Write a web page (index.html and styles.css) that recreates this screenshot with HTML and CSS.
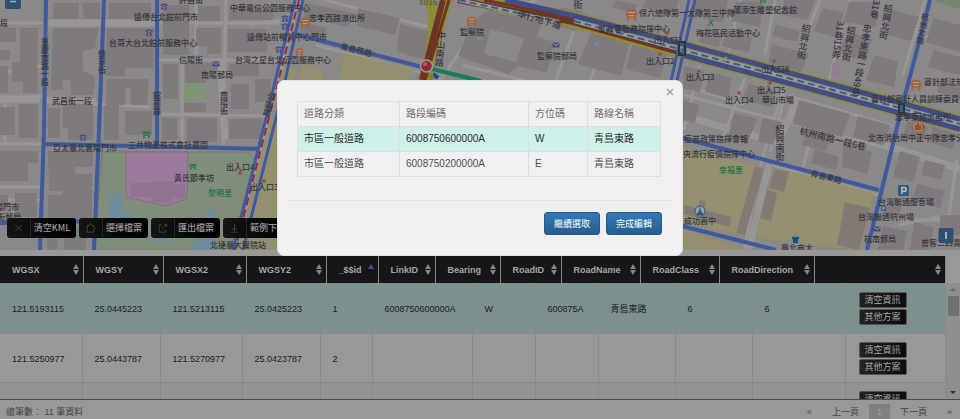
FILE: index.html
```html
<!DOCTYPE html>
<html lang="zh-Hant">
<head>
<meta charset="utf-8">
<title>路段編輯</title>
<link rel="stylesheet" href="styles.css">
</head>
<body>
<main class="page">
<section class="map" aria-label="地圖">
<svg class="map-canvas" viewBox="0 0 960 250">
<defs>
<symbol id="phone" viewBox="0 0 8 7"><path d="M.5 3V1.6Q4-.6 7.500 1.600V3H5.700V1.900H2.300V3zM2 3.300h4l1.200 3.200H.8z" fill="#494b86"/><circle cx="4" cy="4.800" r=".9" fill="#999"/></symbol>
<symbol id="mail" viewBox="0 0 8 6"><rect x=".5" y=".5" width="7" height="5" rx=".6" fill="#494b86"/><path d="M1 1.300 4 3.600 7 1.300" stroke="#aaa" fill="none" stroke-width=".8"/></symbol>
<symbol id="gov" viewBox="0 0 10 10"><path d="M.5 4 2 .6h6L9.500 4v1H8.700v4.500H7.200V7.300H2.800v2.200H1.300V5H.5z" fill="#a5623d"/><path d="M2.300 3h5.400M3 5.500h4" stroke="#aaa" stroke-width=".8"/></symbol>
<symbol id="shop" viewBox="0 0 8 6"><path d="M1 0h6l1 2.500H0zM1 3.200h6V6H5.500V4.300h-3V6H1z" fill="#347b4b"/></symbol>
<symbol id="exit" viewBox="0 0 4 4"><circle cx="2" cy="2" r="1.700" fill="#a34b35" stroke="#77655e" stroke-width=".5"/></symbol>
<symbol id="park" viewBox="0 0 11 11"><rect width="11" height="11" rx="1" fill="#315c83"/><path d="M4 9V2.500h2.200a1.900 1.900 0 0 1 0 3.800H4" fill="none" stroke="#b9bec3" stroke-width="1.500"/></symbol>
</defs>
<rect width="960" height="250" fill="#8b888a"/>
<g class="street">
<path d="M0 23H280M0 99 44 96M0 187h44M44 101 150 107M50 188h44M158 60H300M182 60V150M226 0 223 145M158 114l110 2M196 0v55M0 73l42-7M0 144h45M250 25l30-5M5 100v42M0 200h40"/>
<path d="M325 0 440 30M316 45l117 31M437 85l45-65 55-20M463 65l220 57M578 20 556 80M610 30l-20 50M700 65l-16 65M745 78l-22 60M780 100 762 160 744 250M684 85l60 20M820 0 780 100M850 0l-25 95M740 0l-12 55M775 0l-10 55M684 95l210 55M789 96l104 30M890 145l70 22M957 160l-8 55-50 10M885 220h75M925 0l-22 75M900 30l60 15M772 165l106 30M785 95l-15 57M815 122l-12 45"/>
<path class="wide" d="M44 23h115M0 99h40M769 164 749 250M798 98 777 145M684 116l95 27M884 145l76 24M220 60l5 80M43 100l53 2"/>
</g>
<g class="buildings">
<path d="M0 28h16v14H0zM20 28h18l-1 65H23V82H12V62h8zM0 50h10v10H0zM0 66h8v27H0zM53 3h26v16H53zM82 3h18v16H84zM53 28h45l-3 20-12 3v20l12 6-2 18H71V80h-8v10H51zM109 3h42v16h-42zM107 28h47l-1 40h-28v8h-19zM107 79h42l-2 26h-16V88h-6v17h-19zM48 108h12v30H48zM63 104h30v36H68v-12h-5zM104 105h15v35h-15zM125 111h27v24h-27zM0 107h15v28H0zM19 104h19v34H19zM0 151h38v12H28v18H0zM48 151h45v16H75v7h17v47H50v-15h12v-15H49zM48 195h30v-8h14v35H48zM0 195h8v15H0zM15 193h22v24H15zM47 230h10v20H47zM64 227h22v23H64z"/>
<path d="M163 5h26v50h-26zM198 6h22v15h-22zM196 28h25v26h-14v-8h-11zM229 7h44v13h-44zM228 29h39v23h-39zM163 64h15v35h-15zM185 63h33v9h-12v11h-21zM184 103h22v9h-22zM229 64h30v12h-30zM231 84h18v25h-18zM255 79h16v23h-16zM229 119h33v20h-33zM162 118h15v22h-15zM187 118h30v24h-30zM307 3l45 10-4 14-45-10zM358 8l42 10-5 17-38-9zM302 22l25 6-3 12-24-6zM400 24l35 9-5 28-33-9z"/>
<path d="M468 24l21-14 53 13-5 14 17 5-7 31-29-7-10 8-50-18 7-16zM560 7l23 5-7 19-21-5zM594 27l37 10-10 39-43-12zM633 42l35 9-8 27-34-9zM617 0l20 5-3 8-23-6zM647 0h32l-5 15-32-8zM693 0h35l-5 23-34-8zM736 2h27l-3 25-28-6zM704 28l20 5-6 14-19-5zM727 31l25 6-3 16-27-7zM823 8l21 5-7 25-23-7zM784 0h31l-8 20-26-5zM776 25l24 6-3 11-25-6zM772 44l37 10-10 23-32-9zM849 2h29l-2 25-33-5zM849 32l23 7-6 22-29-8zM874 55l24 7-4 25-28-7zM891 10l28 7-8 24-27-7zM934 18l26 7v27l-34-10zM934 50l26 7v18l-32-8zM939 81l21 6v13l-23-8z"/>
<path d="M684 66l20 6-4 20-17-4zM710 72l22 6-4 20-23-6zM749 84l27 7-4 16-30-7zM683 100l16 5-4 18-12-3zM734 113l23 6-10 25-19-6zM763 118l19 4-9 23-15-4zM799 100l51 14-8 23-49-13zM858 116l32 9-7 20-30-8zM807 128l25 7-6 16-24-6zM844 144l28 8-5 22-25-7zM815 149l24 8-3 13-25-7zM908 121l20 6-6 15-20-5zM933 127l24 7-4 15-25-7zM900 151l20 6-7 25-20-5zM925 160l20 5-4 15-20-5zM917 184l28 7-5 17-28-7zM888 202l14 4-4 12-14-4zM883 226l24 5-4 19h-25zM914 222l20 5-5 23h-19zM940 215h20v20h-20z"/>
</g>
<path class="court" d="m490 29 34 9-8 24-32-8z"/>
<path d="M102 152h146l7 9-25 89H95z" fill="#818d7b" stroke="#6f7d6a"/>
<path d="M184 83h20v17h-16l-4-3z" fill="#7d9574"/>
<path d="M126 152h62l-1 47-22 7-39-9z" fill="#9b799c" stroke="#876b87"/>
<path d="M131 183h19l4-2h16l5 3h10v14h-12v4h-22v-5h-20z" fill="#907391"/>
<path d="M833 63l9 2-2 12-9-2z" fill="#967c90"/>
<g class="water"><path d="M109 195q7-3 13 0l1 17q12 3 21 11 5 10-5 10-18-6-31-15-1-12 1-23zM152 237h15q-3 8-12 5zM195 239l15-7 9 18h-27zM207 206l9 5v9h-8zM477 37h7l-2 3h-5zM595 42l5 2-2 3-4-2z"/></g>
<g class="campus">
<path d="M345 54l68 16-6 10H340zM303 65l20 5-2 10h-21zM683 148l79 20-20 67-60-15zM775 168l98 26-14 56-103-13zM684 231l55 16v3h-55zM262 140l15-28v138h-40zM273 95l12-27 12 4-4 8h-15z"/>
<path class="block" d="M755 166l9 3-19 66-9-2zM775 169l14 3-5 20-15-4zM767 190l10 3-6 28-11-3zM845 202l25 6-11 42-22-5zM684 205l48 12-3 10-45-13zM700 200l6 2-3 16-6-2z"/>
</g>
<path d="M936 0h24v9l-23-7z" fill="#74866d"/>
<g class="major">
<path class="yellow wide" d="M428 0l6 12-3 38-8 30M447 0l-22 80"/>
<path class="yellow" d="M490 0 575 16 683 44 960 119M463 0l110 24 110 31 277 74"/>
<path class="brown" d="m443 0-21 80M458 0l115 22 110 31"/>
<path class="brown thin" d="m449 0-24 80M484 0l90 18"/>
<path class="blue" d="M505 0l70 16 108 28 277 75M683 55l277 74"/>
<path class="lane" d="m574 21 109 29 277 74M459 0l100 22"/>
<path class="laneblue" d="m574 21 109 29 277 74M459 0l100 22"/>
</g>
<g class="blue routes"><path d="M46 0 44 130 40 250M104 0l-5 130-5 120M157 0v144M45 144l217 5M0 223l94-2M291 33l131 34M930 0l-28 107-35 143M682 138l197 52M682 226l94 24"/></g>
<g class="rail"><path d="m299 0-64 250"/><path class="rail-dash" d="m299 0-64 250"/><path class="rail-edge" d="m295 0-22 90-40 160M303 0l-20 90-40 160M689 0l-20 90M695 0l-20 90"/></g>
<path d="M679 42h6v13h-6zM899 104h5v9h-5z" fill="none" stroke="#263c31" stroke-width="2"/>
<path d="m720 61 7-4M721 58l5 3" stroke="#789b6e" stroke-width="2"/>
<path d="m428 68 53 13" stroke="#147d5e" stroke-width="4"/>
<circle cx="426.500" cy="66" r="6" fill="#8f2c2f" stroke="#999" stroke-width="1.500"/><circle cx="425" cy="64" r="2" fill="#ba5a5c"/><path d="m433 74 5 4" stroke="#243f83" stroke-width="4"/><circle cx="431" cy="77" r="3" fill="#827e2c"/>
<g class="labels">
<text x="0" y="26">段</text><text x="134" y="20">遠傳台北館前門市</text><text x="109" y="46">台哥大台北館前服務中心</text><text x="179" y="3">許昌街</text><text x="230" y="11">中華電信公園服務中心</text><text x="247" y="40">遠傳站前暢貨中心門市</text><text x="179" y="63">信陽街</text><text x="201" y="78">南陽郵局</text><text x="235" y="63">台灣之星台北公園服務中心</text><text x="52" y="104">武昌街一段</text><text x="309" y="21">忠孝西路派出所</text><text x="53" y="151">亞太臺北襄陽門市</text><text x="128" y="148">三井物產株式會社農園</text><text x="174" y="181">黃氏節孝坊</text><text x="226" y="170">出入口4</text><text x="250" y="190">出入口3</text><text class="green" x="208" y="196">黎明里</text><text x="-5" y="210">陽門市</text><text x="-3" y="220">街郵局</text><text x="210" y="248">北捷臺大醫院站</text>
<text x="419" y="5" class="faint">X016</text><text x="460" y="35">監察院</text><text x="537" y="59">監察院郵局</text><text x="639" y="16">保六總隊第一大隊第三中隊</text><text x="598" y="32">警政署勤務指揮中心</text><text x="654" y="43">出入口1</text><text x="646" y="64">出入口2</text><text x="686" y="80">出入口3</text><text x="761" y="72">出入口6</text><text x="757" y="93">出入口5</text><text x="725" y="103">出入口4</text><text x="762" y="103">華山市場</text><text x="733" y="13">蒲添生雕塑紀念館</text><text x="696" y="36">梅花區民活動中心</text><text x="924" y="85">審計部法規</text><text x="871" y="102">審計部審計人員訓練委員會</text><text x="895" y="120">忠孝東路派出所</text><text x="868" y="141">北市消防局中正中隊忠孝分</text><text x="684" y="142">疫苗政策指揮會報</text><text x="683" y="157">央流行疫情指揮中心</text><text class="green" x="719" y="173">幸福里</text><text x="684" y="224">成功高中</text><text x="781" y="251">臺北商大</text><text x="878" y="205">台灣聯通醒吾場</text><text x="858" y="220">台灣聯通杭州場</text><text x="864" y="242">杭南郵局</text><text x="921" y="246">普客二四青</text>
<text transform="translate(340 49) rotate(14)">青島西路</text><text transform="translate(517 16) rotate(17)" class="big">車行地下道</text><text transform="translate(799 134) rotate(14)" class="big">杭州南路一段6巷</text><text transform="translate(810 176) rotate(14)">青島東路</text>
</g>
<g class="labels vertical"><text x="45" y="38">重慶南路一段</text><text x="102" y="50">懷寧街</text><text x="157" y="91">館前路</text><text x="224" y="91">南陽街</text><text class="big" transform="translate(442 31) rotate(5)">中山南路</text><text transform="translate(272 93) rotate(14)">公園路</text><text transform="translate(807 24) rotate(10)" class="big">紹興北街</text><text transform="translate(852 26) rotate(10)" class="big">紹興北街</text><text transform="translate(841 21) rotate(8)" class="big">31巷15弄</text><text transform="translate(868 24) rotate(10)" class="big">忠孝東路一段49巷</text><text transform="translate(889 4) rotate(10)" class="big">紹興北街</text><text transform="translate(877 0) rotate(10)" class="big">31巷</text><text x="780" y="125" class="big">紹興南街</text><text x="578" y="0" class="big">街</text><text transform="translate(926 13) rotate(12)">杭州北路</text></g>
<g>
<use href="#phone" x="160" y="3" width="8" height="7"/><use href="#phone" x="145" y="29" width="8" height="7"/><use href="#mail" x="212" y="61" width="8" height="6"/><use href="#phone" x="281" y="15" width="8" height="7"/><use href="#phone" x="281" y="23" width="8" height="7"/><use href="#phone" x="275" y="46" width="8" height="7"/><use href="#phone" x="79" y="134" width="8" height="7"/><use href="#shop" x="142" y="131" width="9" height="7"/><use href="#shop" x="189" y="164" width="8" height="6"/><use href="#gov" x="299" y="17" width="12" height="12"/><use href="#gov" x="294" y="48" width="11" height="9"/><use href="#gov" x="466" y="16" width="11" height="11"/><use href="#gov" x="625" y="8" width="13" height="14"/><use href="#gov" x="910" y="78" width="12" height="14"/><use href="#mail" x="552" y="42" width="8" height="6"/><use href="#mail" x="873" y="226" width="8" height="6"/><use href="#shop" x="759" y="-3" width="8" height="6"/>
<use href="#exit" x="238" y="171" width="4" height="4"/><use href="#exit" x="262" y="179" width="4" height="4"/><use href="#exit" x="665" y="31" width="4" height="4"/><use href="#exit" x="658" y="52" width="4" height="4"/><use href="#exit" x="697" y="69" width="4" height="4"/><use href="#exit" x="772" y="59" width="4" height="4"/><use href="#exit" x="768" y="81" width="4" height="4"/><use href="#exit" x="737" y="91" width="4" height="4"/><use href="#park" x="898" y="185" width="11" height="11"/><use href="#park" x="879" y="206" width="9" height="5"/>
<circle cx="918" cy="127" r="6" fill="#9a8177" stroke="#9c5739"/><path d="M915 130v-5h2v-2h2v2h2v5zM922 124l3 3-2 3" fill="#9b502d"/><circle cx="700" cy="211" r="5" fill="#96a0aa" stroke="#31597e"/><path d="m700 206 1 5 3 4h-8l3-4z" fill="#31597e"/><circle cx="795.500" cy="239.500" r="5" fill="#718b9e"/><path d="M792 237h7v2h-1v4h-5v-4h-1z" fill="#294d6c"/><path d="m709 19 2 3 3-2M711 22l-3 4M711 22l2 4" stroke="#367449" fill="none" stroke-width="1.200"/>
</g>
<path d="M5-3h16V7q0 2-2 2H7Q5 9 5 7z" fill="#31506f"/><path d="M10 1.500h6" stroke="#a6adb4" stroke-width="1.500"/>
<rect x="938.500" y="228" width="15" height="15" rx="2" fill="#31506f"/><path d="M946 232v7" stroke="#a6adb4" stroke-width="2"/>
</svg>
<div class="toolbar">
<button class="tool" type="button"><svg viewBox="0 0 12 12"><path d="m2 2 8 8M10 2l-8 8"/></svg><span>清空KML</span></button>
<button class="tool" type="button"><svg viewBox="0 0 12 12"><path d="M2 3h2.500q-.5-2 1.500-2t1.500 2H10v2.500q1.500 0 1.500 1T10 7.500V11H2z"/></svg><span>選擇檔案</span></button>
<button class="tool" type="button"><svg viewBox="0 0 12 12"><path d="M5.500 2.500H2V11h8V7.500M7.500 1.500H11V5M11 1.500 5.500 7"/></svg><span>匯出檔案</span></button>
<button class="tool" type="button"><svg viewBox="0 0 12 12"><path d="M6 1v8M3.500 6.500 6 9l2.500-2.500M2 11h8"/></svg><span>範例下載</span></button>
</div>
</section>

<section class="data">
<table class="grid grid-head">
<colgroup><col class="h-a"><col class="h-b"><col class="h-c"><col class="h-b"><col class="h-d"><col class="h-e"><col class="h-f"><col class="h-g"><col class="h-h"><col class="h-h"><col class="h-i"><col></colgroup>
<thead><tr><th>WGSX<i class="sort"></i></th><th>WGSY<i class="sort"></i></th><th>WGSX2<i class="sort"></i></th><th>WGSY2<i class="sort"></i></th><th>_$$id<i class="sort sort-up"></i></th><th>LinkID<i class="sort"></i></th><th>Bearing<i class="sort"></i></th><th>RoadID<i class="sort"></i></th><th>RoadName<i class="sort"></i></th><th>RoadClass<i class="sort"></i></th><th>RoadDirection<i class="sort"></i></th><th><i class="sort"></i></th></tr></thead>
</table>
<div class="scroll">
<table class="grid grid-body">
<colgroup><col class="b-a"><col class="b-b"><col class="b-a"><col class="b-b"><col class="b-c"><col class="b-d"><col class="b-e"><col class="b-e"><col class="b-f"><col class="b-f"><col class="b-g"><col></colgroup>
<tbody>
<tr class="picked"><td>121.5193115</td><td>25.0445223</td><td>121.5213115</td><td>25.0425223</td><td>1</td><td>6008750600000A</td><td>W</td><td>600875A</td><td>青島東路</td><td>6</td><td>6</td><td><div class="actions"><button type="button">清空資訊</button><button type="button">其他方案</button></div></td></tr>
<tr><td>121.5250977</td><td>25.0443787</td><td>121.5270977</td><td>25.0423787</td><td>2</td><td></td><td></td><td></td><td></td><td></td><td></td><td><div class="actions"><button type="button">清空資訊</button><button type="button">其他方案</button></div></td></tr>
<tr class="alt"><td></td><td></td><td></td><td></td><td></td><td></td><td></td><td></td><td></td><td></td><td></td><td><div class="actions"><button type="button">清空資訊</button><button type="button">其他方案</button></div></td></tr>
</tbody>
</table>
<div class="track"><span class="arrow up"></span><span class="thumb"></span><span class="arrow down"></span></div>
</div>
</section>

<footer class="foot">
<span>總筆數： 11 筆資料</span>
<nav class="pager"><a href="#">«</a><a href="#">上一頁</a><a href="#" class="current">1</a><a href="#">下一頁</a><a href="#">»</a></nav>
</footer>
</main>

<div class="modal" role="dialog" aria-label="路段選取">
<button class="close" type="button" aria-label="關閉"><svg viewBox="0 0 8 8"><path d="m1 1 6 6M7 1 1 7"/></svg></button>
<table class="roads">
<colgroup><col class="r-a"><col class="r-b"><col class="r-c"><col></colgroup>
<thead><tr><th>道路分類</th><th>路段編碼</th><th>方位碼</th><th>路線名稱</th></tr></thead>
<tbody>
<tr class="chosen"><td>市區一般道路</td><td>6008750600000A</td><td>W</td><td>青島東路</td></tr>
<tr><td>市區一般道路</td><td>6008750200000A</td><td>E</td><td>青島東路</td></tr>
</tbody>
</table>
<div class="modal-foot"><button type="button">繼續選取</button><button type="button">完成編輯</button></div>
</div>
</body>
</html>
```
FILE: styles.css
```css
* { box-sizing: border-box; }
body {
  margin: 0;
  background: #989898;
  color: #1c1c1c;
  font: 9px/12px "Liberation Sans", "Noto Sans CJK TC", sans-serif;
}
button { font: inherit; margin: 0; cursor: pointer; }
table { border-collapse: collapse; table-layout: fixed; }
.page { display: flex; flex-direction: column; height: 100vh; overflow: hidden; }

/* Map */
.map { position: relative; flex: none; margin-bottom: 6px; }
.map-canvas { display: block; width: 100%; }
.street path { fill: none; stroke: #989595; stroke-width: 3; }
.street .wide { stroke-width: 7; }
.buildings { fill: #7e7a7d; }
.court { fill: #8b888a; }
.water { fill: #6f8c9b; }
.campus { fill: #929071; stroke: #9b9152; }
.campus .block { fill: #827b74; stroke: none; }
.major path { fill: none; }
.major .yellow { stroke: #8e8a35; stroke-width: 8; }
.major .wide { stroke-width: 10; }
.major .brown { stroke: #6d3523; stroke-width: 6; }
.major .thin { stroke-width: 3; }
.major .lane { stroke: #999; stroke-width: 4; }
.major .laneblue { stroke: #345f9f; stroke-width: 2; stroke-dasharray: 7 4; }
.major .blue { stroke: #424c86; stroke-width: 5; }
.routes { fill: none; stroke: #405a9d; stroke-width: 4; }
.rail path { fill: none; stroke: #999; stroke-width: 3; }
.rail .rail-dash { stroke: #9b2832; stroke-width: 2; stroke-dasharray: 8 4; }
.rail .rail-edge { stroke: #405a9d; }
.labels { font: 500 8px "Noto Sans CJK TC", sans-serif; fill: #36363b; }
.labels .big { font-size: 9px; }
.labels .green { fill: #28704a; }
.labels .faint { fill: #5c5b48; }
.vertical text { writing-mode: vertical-rl; }

.toolbar { position: absolute; left: 7px; bottom: 12px; display: flex; gap: 3px; }
.tool {
  display: flex;
  align-items: center;
  width: 69px;
  height: 20px;
  padding: 0 3px 0 0;
  border: 0;
  border-radius: 3px;
  overflow: hidden;
  background: linear-gradient(90deg, #141414, #000);
  color: #999;
  font: 500 9px/20px "Noto Sans CJK TC", sans-serif;
}
.tool svg {
  flex: none;
  width: 24px;
  height: 20px;
  padding: 5px 6px;
  border-right: 1px solid #252525;
  fill: none;
  stroke: #3d5535;
}
.tool span { flex: 1; white-space: nowrap; }

/* Data grid */
.data { display: flex; flex: 1; flex-direction: column; min-height: 0; border-bottom: 1px solid #4d4d4d; }
.grid { width: calc(100% - 14px); }
.grid-head { background: #171717; color: #a6a6a6; }
.grid-head th {
  position: relative;
  height: 27px;
  padding: 0 0 0 12px;
  border-right: 1px solid #858585;
  text-align: left;
}
.grid-head .h-a { width: 83px; }
.grid-head .h-b { width: 80px; }
.grid-head .h-c { width: 83px; }
.grid-head .h-d { width: 52px; }
.grid-head .h-e { width: 57px; }
.grid-head .h-f { width: 65px; }
.grid-head .h-g { width: 61px; }
.grid-head .h-h { width: 79px; }
.grid-head .h-i { width: 95px; }
.sort { position: absolute; right: 4px; top: 8px; width: 6px; height: 11px; }
.sort::before, .sort::after { content: ""; position: absolute; left: 0; border: 3px solid transparent; }
.sort::before { top: -3px; border-bottom: 5px solid #858585; }
.sort::after { bottom: -3px; border-top: 5px solid #858585; }
.sort-up::before { border-bottom-color: #4c4c8d; }
.sort-up::after { display: none; }

.scroll { display: flex; flex: 1; align-items: flex-start; min-height: 0; overflow: hidden; }
.grid-body { flex: none; }
.grid-body td { height: 49px; padding: 2px 0 0 12px; border: 1px solid #898989; border-left: 0; }
.grid-body tr:first-child td { height: 50px; border-top: 0; }
.picked { background: #7c918d; }
.alt { background: #929292; }
.b-a { width: 82px; }
.b-b { width: 78px; }
.b-c { width: 52px; }
.b-d { width: 100px; }
.b-e { width: 63px; }
.b-f { width: 77px; }
.b-g { width: 93px; }
.actions { display: flex; flex-direction: column; gap: 1px; padding-left: 1px; }
.actions button {
  width: 48px;
  height: 16px;
  padding: 0;
  border: 1px solid #555;
  border-radius: 2px;
  background: linear-gradient(90deg, #222, #0c0c0c);
  color: #a6a6a6;
  line-height: 12px;
}
.track {
  display: flex;
  flex: 1;
  flex-direction: column;
  align-items: center;
  align-self: stretch;
  padding: 5px 0;
  background: #8e8e8e;
}
.thumb { width: 11px; height: 20px; margin: 5px 0 auto; background: #717171; }
.arrow { border: 3px solid transparent; }
.up { border-top: 0; border-bottom-color: #666; }
.down { border-bottom: 0; border-top-color: #333; }

.foot {
  display: flex;
  flex: none;
  justify-content: space-between;
  align-items: center;
  height: 19px;
  padding: 5px 6px 0;
  color: #454545;
  white-space: nowrap;
}
.pager { display: flex; align-items: center; }
.pager a { padding: 0 10px; color: inherit; line-height: 17px; text-decoration: none; }
.pager a:last-child { padding-right: 2px; }
.pager .current { padding: 0 8px; background: #808080; color: #a0a0a0; }

/* Dialog */
.modal {
  position: absolute;
  top: 80px;
  left: 50%;
  width: 406px;
  padding: 20px 11px;
  border: 1px solid #e1e1e1;
  border-radius: 7px;
  background: #f0f0f0;
  color: #505050;
  font-size: 10px;
  transform: translateX(-50%);
}
.close { position: absolute; top: 5px; right: 6px; width: 12px; height: 12px; padding: 2px; border: 0; background: none; }
.close svg { display: block; width: 8px; height: 8px; stroke: #a5a5a5; stroke-width: 1.5; }
.roads { width: calc(100% - 18px); margin-left: 8px; }
.roads th, .roads td { height: 25px; padding: 0 6px; border: 1px solid #dedede; text-align: left; font-weight: 400; }
.roads thead { color: #707070; }
.roads .chosen { background: #cdf0e8; color: #2c2c2c; }
.r-a { width: 102px; }
.r-b { width: 129px; }
.r-c { width: 59px; }
.modal-foot {
  display: flex;
  justify-content: flex-end;
  gap: 6px;
  margin-top: 23px;
  padding: 11px 9px 0 0;
  border-top: 1px solid #e4e4e4;
}
.modal-foot button {
  width: 56px;
  height: 23px;
  padding: 0;
  border: 1px solid #24588a;
  border-radius: 3px;
  background: linear-gradient(#3379b7, #275d8d);
  color: #fff;
  font-size: 9px;
}
```
